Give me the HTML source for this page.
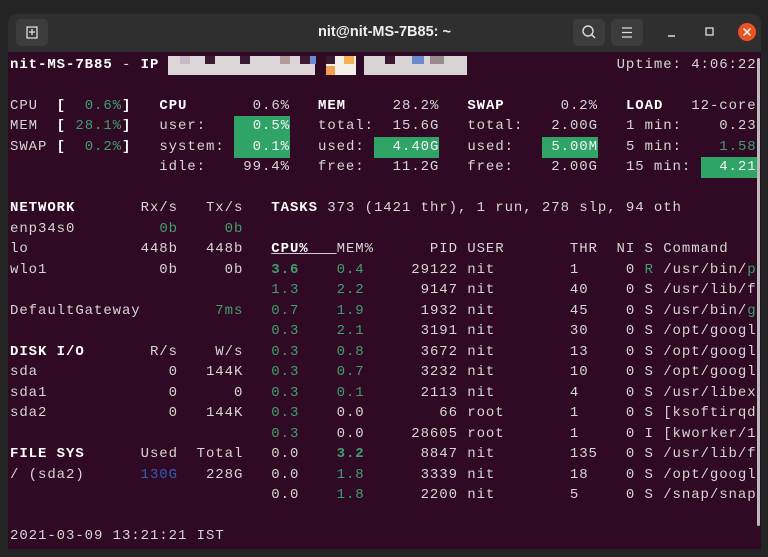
<!DOCTYPE html>
<html><head><meta charset="utf-8"><style>
*{margin:0;padding:0;box-sizing:border-box}
body{width:768px;height:557px;background:#242424;position:relative;overflow:hidden;font-family:"Liberation Sans",sans-serif}
.win{position:absolute;left:8px;top:14px;width:753px;height:535px;background:#300a24;border-radius:8px 8px 0 0;overflow:hidden}
.tb{position:absolute;left:0;top:0;width:753px;height:38px;background:#2f2f2f}
.title{position:absolute;left:0;width:753px;top:10px;text-align:center;color:#eee;font-size:14.5px;font-weight:bold}
.btn{position:absolute;top:5px;width:32px;height:27px;background:#3c3c3c;border-radius:5px}
pre{position:absolute;left:10px;top:55px;font-family:"Liberation Mono",monospace;font-size:14px;letter-spacing:0.93px;line-height:20.48px;color:#d6d6d2}
b{color:#fff}
.g{color:#3f9f6f}
.h{background:#2fa466;color:#f4f4f4;padding:2px 0 3px}
.bl{color:#2f5fb0}
u{text-decoration:underline;text-decoration-color:#ccc;font-weight:bold;color:#fff}
.px{position:absolute;height:19px;top:56px}
</style></head><body>
<div class="win">
<div class="tb">
<div class="btn" style="left:8px"><svg width="32" height="27"><rect x="11" y="8" width="10" height="11" fill="none" stroke="#ddd" stroke-width="1.3"/><path d="M16 10v6M13 13h6" stroke="#ddd" stroke-width="1.3"/></svg></div>
<div class="title">nit@nit-MS-7B85: ~</div>
<div class="btn" style="left:565px"><svg width="32" height="27"><circle cx="15" cy="12" r="5" fill="none" stroke="#ddd" stroke-width="1.4"/><path d="M18.5 15.5l3.5 3.5" stroke="#ddd" stroke-width="1.5"/></svg></div>
<div class="btn" style="left:603px"><svg width="32" height="27"><path d="M11 9h10M11 13.5h10M11 18h10" stroke="#ddd" stroke-width="1.3"/></svg></div>
<svg style="position:absolute;left:655px;top:5px" width="95" height="27"><path d="M5 17h7" stroke="#ddd" stroke-width="1.5"/><rect x="43" y="9" width="7" height="7" fill="none" stroke="#ddd" stroke-width="1.3"/><circle cx="84" cy="13" r="9" fill="#e95420"/><path d="M80.5 9.5l7 7M87.5 9.5l-7 7" stroke="#fff" stroke-width="1.5"/></svg>
</div>
<div style="position:absolute;right:1px;top:44px;width:3px;height:468px;background:#bbb;border-radius:2px"></div>
</div>
<div class="px" style="left:168px;width:147px;background:#dcd6d8"></div>
<div class="px" style="left:180px;width:10px;height:8px;background:#c9b8c8"></div>
<div class="px" style="left:205px;width:10px;height:8px;background:#3a1a30"></div>
<div class="px" style="left:240px;width:10px;height:8px;background:#3a1a30"></div>
<div class="px" style="left:280px;width:10px;height:8px;background:#b09a9a"></div>
<div class="px" style="left:300px;width:10px;height:8px;background:#3a1a30"></div>
<div class="px" style="left:310px;width:6px;height:8px;background:#6a8ad0"></div>
<div class="px" style="left:326px;width:30px;background:#f4efe8"></div>
<div class="px" style="left:326px;width:9px;height:8px;background:#3a1a30"></div>
<div class="px" style="left:344px;width:10px;height:8px;background:#f2b050"></div>
<div class="px" style="left:326px;width:9px;height:9px;top:66px;background:#f2a050"></div>
<div class="px" style="left:364px;width:103px;background:#d8d4d6"></div>
<div class="px" style="left:385px;width:10px;height:8px;background:#3a1a30"></div>
<div class="px" style="left:412px;width:12px;height:8px;background:#6a8ad0"></div>
<div class="px" style="left:430px;width:14px;height:8px;background:#9a8a90"></div>
<pre><b>nit-MS-7B85</b> - <b>IP</b>                                                 Uptime: 4:06:22

CPU  <b>[</b>  <span class="g">0.6%</span><b>]</b>   <b>CPU</b>       0.6%   <b>MEM</b>     28.2%   <b>SWAP</b>      0.2%   <b>LOAD</b>   12-core
MEM  <b>[</b> <span class="g">28.1%</span><b>]</b>   user:   <span class="h">  0.5%</span>   total:  15.6G   total:   2.00G   1 min:    0.23
SWAP <b>[</b>  <span class="g">0.2%</span><b>]</b>   system: <span class="h">  0.1%</span>   used: <span class="h">  4.40G</span>   used:   <span class="h"> 5.00M</span>   5 min:    <span class="g">1.58</span>
                idle:    99.4%   free:   11.2G   free:    2.00G   15 min: <span class="h">  4.21</span>

<b>NETWORK</b>       Rx/s   Tx/s   <b>TASKS</b> 373 (1421 thr), 1 run, 278 slp, 94 oth
enp34s0         <span class="g">0b</span>     <span class="g">0b</span>
lo            448b   448b   <u>CPU%   </u>MEM%      PID USER       THR  NI S Command
wlo1            0b     0b   <b class="g">3.6</b>    <span class="g">0.4</span>     29122 nit        1     0 <span class="g">R</span> /usr/bin/<span class="g">p</span>
                            <span class="g">1.3</span>    <span class="g">2.2</span>      9147 nit        40    0 S /usr/lib/f
DefaultGateway        <span class="g">7ms</span>   <span class="g">0.7</span>    <span class="g">1.9</span>      1932 nit        45    0 S /usr/bin/<span class="g">g</span>
                            <span class="g">0.3</span>    <span class="g">2.1</span>      3191 nit        30    0 S /opt/googl
<b>DISK I/O</b>       R/s    W/s   <span class="g">0.3</span>    <span class="g">0.8</span>      3672 nit        13    0 S /opt/googl
sda              0   144K   <span class="g">0.3</span>    <span class="g">0.7</span>      3232 nit        10    0 S /opt/googl
sda1             0      0   <span class="g">0.3</span>    <span class="g">0.1</span>      2113 nit        4     0 S /usr/libex
sda2             0   144K   <span class="g">0.3</span>    0.0        66 root       1     0 S [ksoftirqd
                            <span class="g">0.3</span>    0.0     28605 root       1     0 I [kworker/1
<b>FILE SYS</b>      Used  Total   0.0    <b class="g">3.2</b>      8847 nit        135   0 S /usr/lib/f
/ (sda2)      <span class="bl">130G</span>   228G   0.0    <span class="g">1.8</span>      3339 nit        18    0 S /opt/googl
                            0.0    <span class="g">1.8</span>      2200 nit        5     0 S /snap/snap

2021-03-09 13:21:21 IST</pre>
</body></html>
